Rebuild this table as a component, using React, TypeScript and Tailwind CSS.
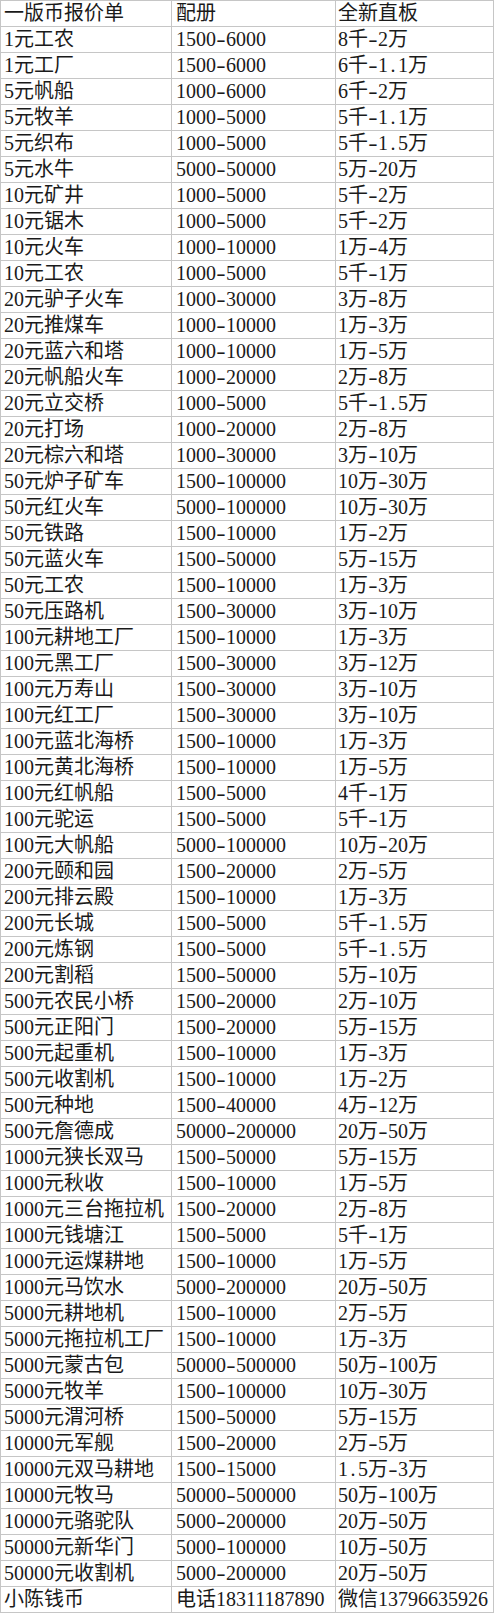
import React from "react";

const rows: [string, string, string][] = [
  ["一版币报价单", "配册", "全新直板"],
  ["1元工农", "1500-6000", "8千-2万"],
  ["1元工厂", "1500-6000", "6千-1.1万"],
  ["5元帆船", "1000-6000", "6千-2万"],
  ["5元牧羊", "1000-5000", "5千-1.1万"],
  ["5元织布", "1000-5000", "5千-1.5万"],
  ["5元水牛", "5000-50000", "5万-20万"],
  ["10元矿井", "1000-5000", "5千-2万"],
  ["10元锯木", "1000-5000", "5千-2万"],
  ["10元火车", "1000-10000", "1万-4万"],
  ["10元工农", "1000-5000", "5千-1万"],
  ["20元驴子火车", "1000-30000", "3万-8万"],
  ["20元推煤车", "1000-10000", "1万-3万"],
  ["20元蓝六和塔", "1000-10000", "1万-5万"],
  ["20元帆船火车", "1000-20000", "2万-8万"],
  ["20元立交桥", "1000-5000", "5千-1.5万"],
  ["20元打场", "1000-20000", "2万-8万"],
  ["20元棕六和塔", "1000-30000", "3万-10万"],
  ["50元炉子矿车", "1500-100000", "10万-30万"],
  ["50元红火车", "5000-100000", "10万-30万"],
  ["50元铁路", "1500-10000", "1万-2万"],
  ["50元蓝火车", "1500-50000", "5万-15万"],
  ["50元工农", "1500-10000", "1万-3万"],
  ["50元压路机", "1500-30000", "3万-10万"],
  ["100元耕地工厂", "1500-10000", "1万-3万"],
  ["100元黑工厂", "1500-30000", "3万-12万"],
  ["100元万寿山", "1500-30000", "3万-10万"],
  ["100元红工厂", "1500-30000", "3万-10万"],
  ["100元蓝北海桥", "1500-10000", "1万-3万"],
  ["100元黄北海桥", "1500-10000", "1万-5万"],
  ["100元红帆船", "1500-5000", "4千-1万"],
  ["100元驼运", "1500-5000", "5千-1万"],
  ["100元大帆船", "5000-100000", "10万-20万"],
  ["200元颐和园", "1500-20000", "2万-5万"],
  ["200元排云殿", "1500-10000", "1万-3万"],
  ["200元长城", "1500-5000", "5千-1.5万"],
  ["200元炼钢", "1500-5000", "5千-1.5万"],
  ["200元割稻", "1500-50000", "5万-10万"],
  ["500元农民小桥", "1500-20000", "2万-10万"],
  ["500元正阳门", "1500-20000", "5万-15万"],
  ["500元起重机", "1500-10000", "1万-3万"],
  ["500元收割机", "1500-10000", "1万-2万"],
  ["500元种地", "1500-40000", "4万-12万"],
  ["500元詹德成", "50000-200000", "20万-50万"],
  ["1000元狭长双马", "1500-50000", "5万-15万"],
  ["1000元秋收", "1500-10000", "1万-5万"],
  ["1000元三台拖拉机", "1500-20000", "2万-8万"],
  ["1000元钱塘江", "1500-5000", "5千-1万"],
  ["1000元运煤耕地", "1500-10000", "1万-5万"],
  ["1000元马饮水", "5000-200000", "20万-50万"],
  ["5000元耕地机", "1500-10000", "2万-5万"],
  ["5000元拖拉机工厂", "1500-10000", "1万-3万"],
  ["5000元蒙古包", "50000-500000", "50万-100万"],
  ["5000元牧羊", "1500-100000", "10万-30万"],
  ["5000元渭河桥", "1500-50000", "5万-15万"],
  ["10000元军舰", "1500-20000", "2万-5万"],
  ["10000元双马耕地", "1500-15000", "1.5万-3万"],
  ["10000元牧马", "50000-500000", "50万-100万"],
  ["10000元骆驼队", "5000-200000", "20万-50万"],
  ["50000元新华门", "5000-100000", "10万-50万"],
  ["50000元收割机", "5000-200000", "20万-50万"],
  ["小陈钱币", "电话18311187890", "微信13796635926"],
];

function Cell({ text }: { text: string }) {
  const parts = text.split(/([-.])/);
  return (
    <>
      {parts.map((p, i) =>
        p === "-" ? (
          <span key={i} className="inline-block w-[10px] text-center scale-x-[1.4]">
            -
          </span>
        ) : p === "." ? (
          <span key={i} className="inline-block w-[10px] text-center">
            .
          </span>
        ) : (
          <React.Fragment key={i}>{p}</React.Fragment>
        )
      )}
    </>
  );
}

export default function App() {
  return (
    <div
      className="w-[494px] bg-white border-l border-t border-[#c6c6c6] text-[20px] leading-[25px] text-[#1a1a1a]"
      style={{ fontFamily: '"Liberation Serif", "Noto Sans CJK SC", serif' }}
    >
      {rows.map((r, i) => (
        <div key={i} className="flex h-[26px]">
          <div className="w-[171px] h-[26px] border-r border-b border-[#c6c6c6] pl-[3px] whitespace-nowrap overflow-hidden">
            <Cell text={r[0]} />
          </div>
          <div className="w-[164px] h-[26px] border-r border-b border-[#c6c6c6] pl-[4px] whitespace-nowrap overflow-hidden">
            <Cell text={r[1]} />
          </div>
          <div className="w-[158px] h-[26px] border-r border-b border-[#c6c6c6] pl-[2px] whitespace-nowrap overflow-hidden">
            <Cell text={r[2]} />
          </div>
        </div>
      ))}
    </div>
  );
}
